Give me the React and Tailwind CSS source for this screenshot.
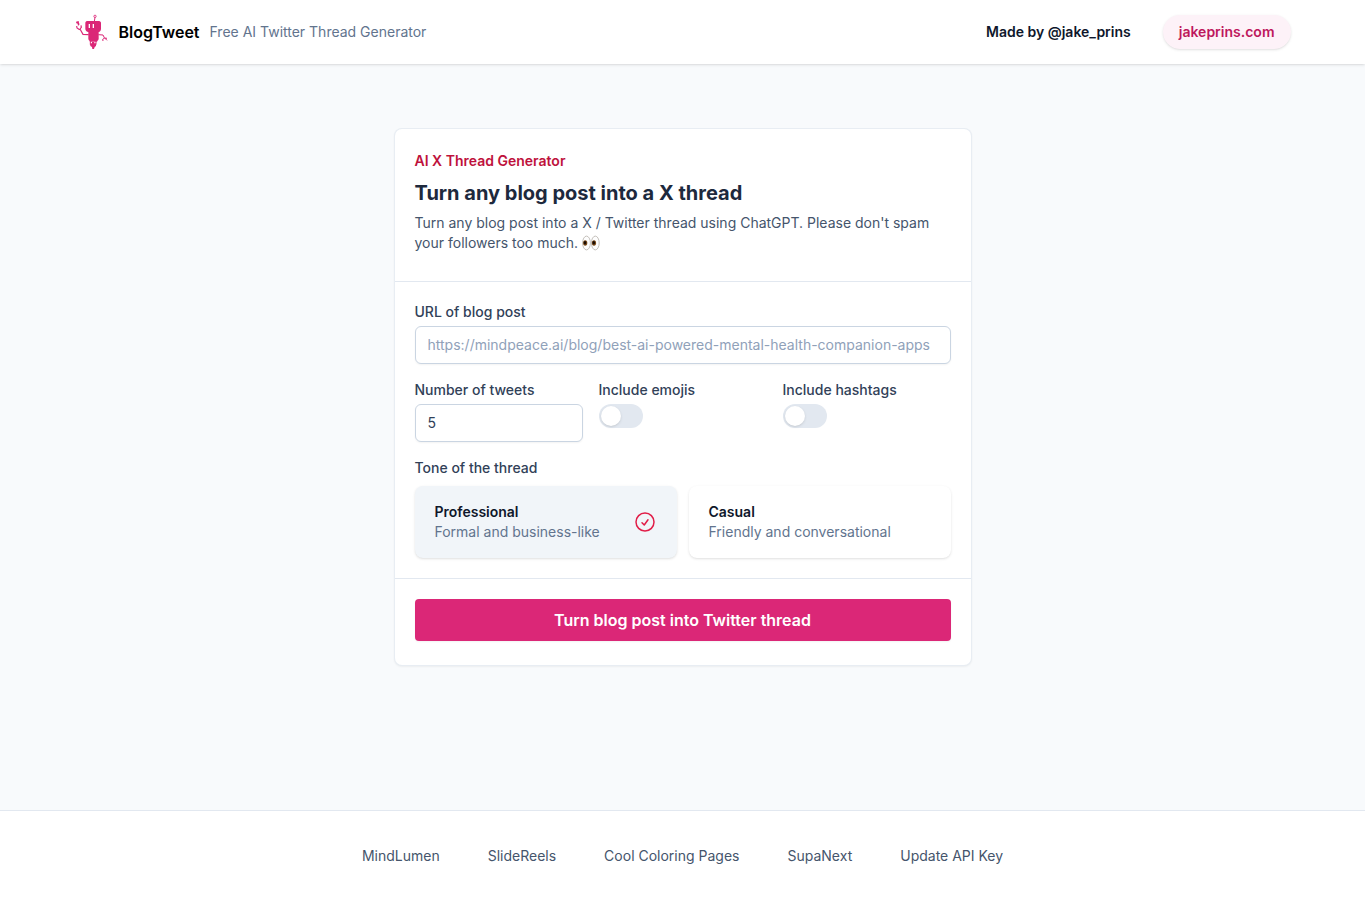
import React, { useState } from 'react';

const tones = [
  { id: 'professional', title: 'Professional', description: 'Formal and business-like' },
  { id: 'casual', title: 'Casual', description: 'Friendly and conversational' },
];

const footerLinks = ['MindLumen', 'SlideReels', 'Cool Coloring Pages', 'SupaNext', 'Update API Key'];

const RobotLogo = () => (
  <svg viewBox="7 6 102 108" className="h-9 w-[34px] shrink-0 text-[#db2777]" fill="none" stroke="currentColor" aria-hidden="true">
    {/* antenna */}
    <circle cx="67" cy="13" r="3.5" strokeWidth="2.5" />
    <path d="M67 16l-2 12" strokeWidth="3" />
    {/* head and body */}
    <path
      d="M43 27h36c4 0 6 3 6 6v17c0 6-3 9-7 10v20c0 3-3 5-5 9H52c-2-4-5-6-5-9V60c-5-1-9-4-9-10V33c0-3 2-6 5-6z"
      fill="currentColor"
      stroke="none"
    />
    <path d="M50 36v12M62 36v12" stroke="white" strokeWidth="4" />
    {/* left arm */}
    <path d="M48 68l-17-1-9-16M21 53l-8-5-1-6M22 51l4-5-1-6" strokeWidth="3.5" />
    <path d="M10 29l8-2 1 6 2 4-5 5-1-7-4-1z" fill="currentColor" stroke="none" />
    {/* right arm */}
    <path d="M77 68l14 1 4 8 8 8M96 78l-6 4 1 5M96 78l7 1" strokeWidth="3" />
    {/* legs */}
    <path d="M53 87v11M70 87v11M53 98h5M65 98h5" strokeWidth="3" />
    <path d="M58 90h7v4h5v8l-4 3-2 6h-5l-1-6-5-3v-8h5z" fill="currentColor" stroke="none" />
  </svg>
);

const Eyes = () => (
  <svg viewBox="0 0 18 16" className="inline-block h-4 w-[18px] align-text-bottom" role="img" aria-label="eyes">
    <ellipse cx="4.5" cy="8" rx="3.9" ry="6.9" fill="#fdfdfd" stroke="#c4c0bb" />
    <ellipse cx="13.3" cy="8" rx="3.9" ry="6.9" fill="#fdfdfd" stroke="#c4c0bb" />
    <ellipse cx="3.2" cy="8" rx="2.1" ry="2.8" fill="#7a4a17" />
    <ellipse cx="12" cy="8" rx="2.1" ry="2.8" fill="#7a4a17" />
    <ellipse cx="3" cy="7.8" rx="1.3" ry="1.8" fill="#1a0d05" />
    <ellipse cx="11.8" cy="7.8" rx="1.3" ry="1.8" fill="#1a0d05" />
  </svg>
);

const CheckCircle = () => (
  <svg viewBox="0 0 24 24" className="h-6 w-6 text-[#e11d48]" fill="none" stroke="currentColor" strokeWidth="1.5" strokeLinecap="round" strokeLinejoin="round" aria-hidden="true">
    <path d="M9 12.75L11.25 15 15 9.75M21 12a9 9 0 11-18 0 9 9 0 0118 0z" />
  </svg>
);

const Toggle = ({ id, label }) => {
  const [enabled, setEnabled] = useState(false);

  return (
    <div>
      <label htmlFor={id} className="mb-1 block text-sm font-medium text-slate-700">{label}</label>
      <input
        id={id}
        type="checkbox"
        role="switch"
        checked={enabled}
        onChange={(e) => setEnabled(e.target.checked)}
        className="block h-6 w-11 cursor-pointer appearance-none rounded-full bg-slate-200 p-0.5 transition-colors before:block before:h-5 before:w-5 before:rounded-full before:bg-white before:shadow-sm before:transition-transform before:content-[''] checked:bg-[#db2777] checked:before:translate-x-5"
      />
    </div>
  );
};

const App = () => {
  const [url, setUrl] = useState('');
  const [count, setCount] = useState('5');
  const [tone, setTone] = useState('professional');

  return (
    <div className="flex min-h-screen flex-col bg-slate-50 font-['Inter',sans-serif] text-slate-900">
      <header className="bg-white shadow-sm">
        <div className="mx-auto flex h-16 max-w-7xl items-center justify-between px-8">
          <div className="flex items-center gap-2.5">
            <a href="#" className="flex items-center gap-2.5 font-semibold text-black">
              <RobotLogo />
              BlogTweet
            </a>
            <p className="text-sm text-slate-500">Free AI Twitter Thread Generator</p>
          </div>
          <div className="flex items-center gap-8 text-sm">
            <a href="#" className="font-semibold">Made by @jake_prins</a>
            <a href="#" className="rounded-full bg-[#fdf2f8] px-4 py-2 font-semibold leading-[18px] text-[#be185d] shadow-sm">jakeprins.com</a>
          </div>
        </div>
      </header>

      <main className="flex-1 px-4 py-16">
        <form
          onSubmit={(e) => e.preventDefault()}
          className="mx-auto max-w-[578px] divide-y divide-slate-200 rounded-lg border border-slate-200/80 bg-white shadow-xs"
        >
          <div className="px-5 pt-[22px] pb-7">
            <p className="text-sm font-semibold text-[#be123c]">AI X Thread Generator</p>
            <h1 className="mt-2 mb-1.5 text-xl font-bold leading-7 text-slate-800">Turn any blog post into a X thread</h1>
            <p className="text-sm text-slate-600">
              Turn any blog post into a X / Twitter thread using ChatGPT. Please don't spam your followers too much. <Eyes />
            </p>
          </div>

          <div className="space-y-4 p-5">
            <div>
              <label htmlFor="url" className="mb-1 block text-sm font-medium text-slate-700">URL of blog post</label>
              <input
                id="url"
                type="url"
                value={url}
                onChange={(e) => setUrl(e.target.value)}
                placeholder="https://mindpeace.ai/blog/best-ai-powered-mental-health-companion-apps"
                className="block w-full rounded-md border border-slate-300 bg-white px-3 py-2 text-sm text-slate-700 shadow-xs placeholder:text-slate-400"
              />
            </div>

            <div className="grid grid-cols-3 gap-4">
              <div>
                <label htmlFor="count" className="mb-1 block text-sm font-medium text-slate-700">Number of tweets</label>
                <input
                  id="count"
                  type="number"
                  value={count}
                  onChange={(e) => setCount(e.target.value)}
                  className="block w-full rounded-md border border-slate-300 bg-white px-3 py-2 text-sm text-slate-700 shadow-xs"
                />
              </div>
              <Toggle id="emojis" label="Include emojis" />
              <Toggle id="hashtags" label="Include hashtags" />
            </div>

            <fieldset>
              <legend className="mb-2 text-sm font-medium text-slate-700">Tone of the thread</legend>
              <div className="grid grid-cols-2 gap-3">
                {tones.map((item) => (
                  <label
                    key={item.id}
                    className="flex cursor-pointer items-center justify-between rounded-lg bg-white px-5 py-4 text-sm shadow-sm has-checked:bg-slate-100"
                  >
                    <input
                      type="radio"
                      name="tone"
                      value={item.id}
                      checked={tone === item.id}
                      onChange={() => setTone(item.id)}
                      className="sr-only"
                    />
                    <span>
                      <span className="block font-semibold">{item.title}</span>
                      <span className="block text-slate-500">{item.description}</span>
                    </span>
                    {tone === item.id && <CheckCircle />}
                  </label>
                ))}
              </div>
            </fieldset>
          </div>

          <div className="px-5 pt-5 pb-6">
            <button type="submit" className="block w-full rounded-sm bg-[#db2777] py-[9px] font-semibold text-white shadow-xs hover:bg-[#be185d]">
              Turn blog post into Twitter thread
            </button>
          </div>
        </form>
      </main>

      <footer className="border-t border-slate-200 bg-white">
        <nav className="flex flex-wrap justify-center gap-x-12 gap-y-3 px-6 pt-[35px] pb-[34px] text-sm text-slate-600">
          {footerLinks.map((link) => (
            <a key={link} href="#" className="hover:text-slate-900">{link}</a>
          ))}
        </nav>
      </footer>
    </div>
  );
};

export default App;
